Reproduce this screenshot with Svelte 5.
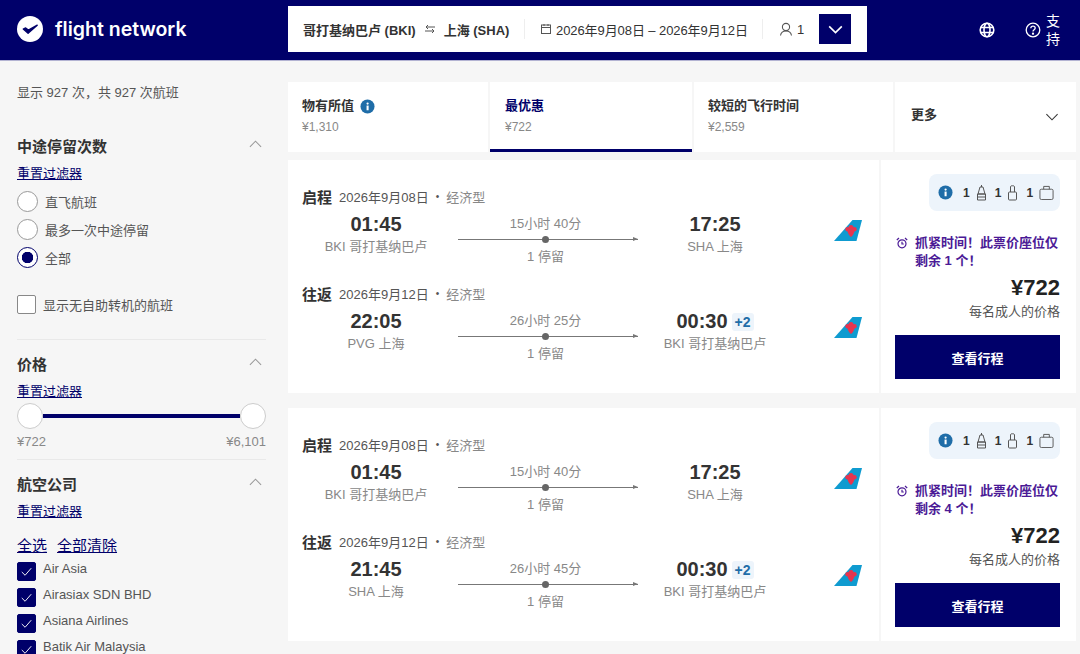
<script>
  const tabs = [
    { title: '物有所值', price: '¥1,310', info: true },
    { title: '最优惠', price: '¥722', active: true },
    { title: '较短的飞行时间', price: '¥2,559' }
  ]
  const stops = ['直飞航班', '最多一次中途停留', '全部']
  const airlines = ['Air Asia', 'Airasiax SDN BHD', 'Asiana Airlines', 'Batik Air Malaysia']
  const cards = [
    {
      left: 1,
      legs: [
        { kind: '启程', date: '2026年9月08日', dep: '01:45', from: 'BKI 哥打基纳巴卢', dur: '15小时 40分', arr: '17:25', to: 'SHA 上海' },
        { kind: '往返', date: '2026年9月12日', dep: '22:05', from: 'PVG 上海', dur: '26小时 25分', arr: '00:30', plus: '+2', to: 'BKI 哥打基纳巴卢' }
      ]
    },
    {
      left: 4,
      legs: [
        { kind: '启程', date: '2026年9月08日', dep: '01:45', from: 'BKI 哥打基纳巴卢', dur: '15小时 40分', arr: '17:25', to: 'SHA 上海' },
        { kind: '往返', date: '2026年9月12日', dep: '21:45', from: 'SHA 上海', dur: '26小时 45分', arr: '00:30', plus: '+2', to: 'BKI 哥打基纳巴卢' }
      ]
    }
  ]
</script>

{#snippet chevron(cls)}
  <svg class={cls} viewBox="0 0 16 10" fill="none" stroke="currentColor" stroke-width="1.3"><path d="M1 1.5 8 8.5 15 1.5" /></svg>
{/snippet}

{#snippet info()}
  <svg class="info" viewBox="0 0 16 16"><circle cx="8" cy="8" r="7.5" fill="#1f6da8" /><rect x="7" y="7" width="2.2" height="5" fill="#fff" /><circle cx="8.1" cy="4.8" r="1.2" fill="#fff" /></svg>
{/snippet}

{#snippet tail()}
  <svg class="tail" viewBox="0 0 28 21">
    <path d="M28 0H18.5L0 21H22.5Z" fill="#0f9bd0" />
    <g fill="#e8344e">
      <circle cx="13.6" cy="9.2" r="2.3" />
      <circle cx="17" cy="7.6" r="2.5" />
      <circle cx="20.4" cy="9.2" r="2.3" />
      <path d="M13.4 10H20.6C20.4 13 19 15.4 17 17 15 15.4 13.6 13 13.4 10Z" />
    </g>
  </svg>
{/snippet}

<header class="topbar">
  <div class="logo">
    <svg viewBox="0 0 27 27"><circle cx="13.5" cy="13.5" r="13.5" fill="#fff" /><path d="M6.5 13.5 11.5 18 21 9.5 11.8 14.6 9 12.4Z" fill="#00006a" stroke="#00006a" stroke-width="1.4" stroke-linejoin="round" /></svg>
    <span>flight network</span>
  </div>
  <div class="search">
    <div class="route">
      <span>哥打基纳巴卢 (BKI)</span>
      <svg class="swap" viewBox="0 0 12 10" fill="none" stroke="#555" stroke-width="1"><path d="M11 3H2M4 1 2 3 4 5M1 7H10M8 5 10 7 8 9" /></svg>
      <span>上海 (SHA)</span>
    </div>
    <div class="dates">
      <svg class="cal" viewBox="0 0 12 12" fill="none" stroke="#555" stroke-width="1"><rect x="1.5" y="2" width="9" height="8.5" /><path d="M1.5 4.5H10.5M4 1V3M8 1V3" /></svg>
      <span>2026年9月08日 – 2026年9月12日</span>
    </div>
    <div class="pax">
      <svg viewBox="0 0 14 14" fill="none" stroke="#555" stroke-width="1.1"><circle cx="7" cy="5" r="3.6" /><path d="M1.5 13.5C2 10.5 4 9 7 9s5 1.5 5.5 4.5" /></svg>
      <span>1</span>
    </div>
    <button class="expand" aria-label="展开">{@render chevron('chev-white')}</button>
  </div>
  <div class="top-right">
    <svg class="globe" viewBox="0 0 16 16" fill="none" stroke="#fff" stroke-width="1.6"><circle cx="8" cy="8" r="6.8" /><ellipse cx="8" cy="8" rx="3" ry="6.8" /><path d="M1.5 5.5H14.5M1.5 10.5H14.5" /></svg>
    <svg class="help" viewBox="0 0 16 16" fill="none" stroke="#fff" stroke-width="1.3"><circle cx="8" cy="8" r="6.8" /><path d="M5.8 6.2C5.9 4.8 6.8 4.1 8 4.1s2.2.8 2.2 2c0 1.7-2.2 1.7-2.2 3.5" /><circle cx="8" cy="11.7" r=".5" fill="#fff" /></svg>
    <span class="support">支持</span>
  </div>
</header>

<div class="page">
  <aside class="sidebar">
    <p class="count">显示 927 次，共 927 次航班</p>

    <section class="filter">
      <div class="filter-head"><h3>中途停留次数</h3>{@render chevron('chev-up')}</div>
      <a class="reset" href="#top">重置过滤器</a>
      <div class="radios">
        {#each stops as s, i}
          <div class="radio-row">
            <span class="radio" class:on={i === 2}></span>
            <span>{s}</span>
          </div>
        {/each}
      </div>
      <div class="selfcheck"><span class="box"></span><span>显示无自助转机的航班</span></div>
    </section>

    <section class="filter">
      <div class="filter-head"><h3>价格</h3>{@render chevron('chev-up')}</div>
      <a class="reset" href="#top">重置过滤器</a>
      <div class="slider"><span class="knob"></span><span class="track"></span><span class="knob"></span></div>
      <div class="range"><span>¥722</span><span>¥6,101</span></div>
    </section>

    <section class="filter">
      <div class="filter-head"><h3>航空公司</h3>{@render chevron('chev-up')}</div>
      <a class="reset" href="#top">重置过滤器</a>
      <div class="bulk"><a href="#top">全选</a><a href="#top">全部清除</a></div>
      {#each airlines as a}
        <div class="airline">
          <span class="box checked"><svg viewBox="0 0 18 18" fill="none" stroke="#fff" stroke-width="1"><path d="M4 9.5 7.5 13 14 5.5" /></svg></span>
          <span>{a}</span>
        </div>
      {/each}
    </section>
  </aside>

  <main class="results">
    <div class="tabs">
      {#each tabs as t}
        <div class="tab" class:active={t.active}>
          <div class="tab-title">{t.title}{#if t.info}{@render info()}{/if}</div>
          <div class="tab-price">{t.price}</div>
        </div>
      {/each}
      <div class="tab more"><span class="tab-title">更多</span>{@render chevron('chev-more')}</div>
    </div>

    {#each cards as card}
      <article class="card">
        <div class="legs">
          {#each card.legs as leg}
            <div class="leg">
              <div class="leg-head">
                <strong>{leg.kind}</strong>
                <span class="date">{leg.date}</span>
                <span class="dot">•</span>
                <span class="cabin">经济型</span>
              </div>
              <div class="leg-body">
                <div class="stop">
                  <div class="time">{leg.dep}</div>
                  <div class="place">{leg.from}</div>
                </div>
                <div class="line">
                  <div class="dur">{leg.dur}</div>
                  <div class="rule"><i></i><b></b></div>
                  <div class="dur">1 停留</div>
                </div>
                <div class="stop arrive">
                  <div class="time">{leg.arr}{#if leg.plus}<span class="plus">{leg.plus}</span>{/if}</div>
                  <div class="place">{leg.to}</div>
                </div>
                {@render tail()}
              </div>
            </div>
          {/each}
        </div>
        <div class="offer">
          <div class="bags">
            {@render info()}
            <span>1</span>
            <svg class="bag" viewBox="0 0 11 17" fill="none" stroke="#555" stroke-width="1"><path d="M5.5 1V3M4 3H7L9 10H2ZM1.5 10H9.5V16H1.5ZM1.5 13H9.5" /></svg>
            <span>1</span>
            <svg class="bag" viewBox="0 0 11 17" fill="none" stroke="#555" stroke-width="1"><rect x="1.5" y="8" width="8" height="8" rx="1" /><path d="M3.5 8V2.5C3.5 1.5 7.5 1.5 7.5 2.5V8" /></svg>
            <span>1</span>
            <svg class="case" viewBox="0 0 16 16" fill="none" stroke="#555" stroke-width="1"><rect x="1" y="4.5" width="14" height="11" rx="1.5" /><path d="M5 4.5V1.5H11V4.5" /></svg>
          </div>
          <div class="hurry">
            <svg viewBox="0 0 12 12" fill="none" stroke="#4b1a96" stroke-width="1.2"><circle cx="6" cy="6.8" r="4" /><path d="M6 4.8V7H7.8M.8 3 3 1M11.2 3 9 1" /></svg>
            <span>抓紧时间！此票价座位仅剩余 {card.left} 个！</span>
          </div>
          <div class="price">¥722</div>
          <div class="per">每名成人的价格</div>
          <button class="view">查看行程</button>
        </div>
      </article>
    {/each}
  </main>
</div>

<style>
  :global(body) {
    margin: 0;
    background: #f6f6f6;
    overflow: hidden;
    font-family: "Liberation Sans", "Noto Sans CJK SC", sans-serif;
    color: #333;
  }

  .topbar {
    height: 61px;
    box-sizing: border-box;
    background: #00006a;
    border-bottom: 1px solid #b3b3d2;
    display: flex;
    align-items: center;
    padding: 0 0 0 17px;
  }
  .logo {
    width: 271px;
    flex: none;
    display: flex;
    align-items: center;
    gap: 12px;
    color: #fff;
    margin-top: -2px;
  }
  .logo svg { width: 26px; height: 26px; flex: none; }
  .logo span {
    font-family: Inter, "Liberation Sans", sans-serif;
    font-size: 19.5px;
    font-weight: 600;
  }

  .search {
    width: 579px;
    flex: none;
    height: 46px;
    background: #fff;
    display: flex;
    align-items: center;
    margin-top: -2px;
    font-size: 13px;
    box-sizing: border-box;
    white-space: nowrap;
  }
  .route {
    display: flex;
    align-items: center;
    font-weight: 600;
    color: #333;
    padding-left: 15px;
    width: 237px;
    height: 20px;
    box-sizing: border-box;
    border-right: 1px solid #eee;
    flex: none;
  }
  .swap { width: 12px; height: 10px; margin: 0 8px 0 8px; flex: none; }
  .dates {
    display: flex;
    align-items: center;
    gap: 4px;
    width: 238px;
    height: 20px;
    padding-left: 15px;
    box-sizing: border-box;
    border-right: 1px solid #eee;
    letter-spacing: -0.08px;
    flex: none;
  }
  .cal { width: 12px; height: 12px; flex: none; }
  .pax { display: flex; align-items: center; gap: 4px; padding-left: 16px; width: 56px; box-sizing: border-box; flex: none; }
  .pax svg { width: 14px; height: 14px; }
  .expand {
    width: 32px;
    height: 30px;
    background: #00006a;
    border: 0;
    padding: 0;
    display: flex;
    align-items: center;
    justify-content: center;
    flex: none;
  }
  .chev-white { width: 15px; height: 9px; color: #fff; stroke-width: 1.8; }

  .top-right { display: flex; align-items: center; color: #fff; margin-left: 112px; }
  .globe { width: 16px; height: 16px; margin-right: 30px; flex: none; }
  .help { width: 16px; height: 16px; margin-right: 5px; flex: none; }
  .support { width: 14px; font-size: 14px; line-height: 18px; }

  .page {
    display: flex;
    padding: 21px 4px 0 17px;
    gap: 22px;
    align-items: flex-start;
  }

  .sidebar { width: 249px; flex: none; font-size: 13px; color: #555; }
  .count { margin: 1px 0 32px; line-height: 20px; }
  .filter { border-bottom: 1px solid #e9e9e9; padding: 0 0 8px; margin-bottom: 13px; }
  .filter:last-child { border: 0; }
  .filter-head { display: flex; justify-content: space-between; align-items: center; height: 20px; }
  .filter-head h3 { margin: 0; font-size: 15px; font-weight: 600; color: #333; }
  .chev-up { width: 15px; height: 8px; color: #999; transform: rotate(180deg); margin: 0 3px 2px 0; }
  .reset {
    display: block;
    margin-top: 9px;
    line-height: 20px;
    color: #00006a;
    font-size: 13px;
  }

  .radios { margin-top: 7px; display: flex; flex-direction: column; gap: 7px; }
  .radio-row { display: flex; align-items: center; gap: 7px; height: 21px; }
  .radio {
    width: 21px;
    height: 21px;
    box-sizing: border-box;
    border: 1px solid #999;
    background: #fff;
    border-radius: 50%;
    flex: none;
  }
  .radio.on { border-color: #00006a; background: radial-gradient(circle, #00006a 0 5.5px, #fff 6px); }
  .selfcheck { display: flex; align-items: center; gap: 7px; margin: 27px 0 18px; height: 18px; }
  .box {
    width: 19px;
    height: 19px;
    box-sizing: border-box;
    border: 1px solid #888;
    border-radius: 2px;
    background: #fff;
    flex: none;
    display: block;
  }
  .box.checked { background: #00006a; border-color: #00006a; }
  .box svg { display: block; width: 17px; height: 17px; }

  .slider { display: flex; align-items: center; height: 26px; margin-top: 1px; }
  .knob {
    width: 26px;
    height: 26px;
    box-sizing: border-box;
    border: 1px solid #ccc;
    border-radius: 50%;
    background: #fff;
    flex: none;
  }
  .track { height: 4px; background: #00006a; flex: 1; }
  .range { display: flex; justify-content: space-between; color: #888; line-height: 18px; margin-top: 4px; }

  .bulk { display: flex; gap: 10px; margin: 14px 0 5px; font-size: 15px; line-height: 20px; }
  .bulk a { color: #00006a; }
  .airline { display: flex; align-items: flex-start; gap: 7px; height: 26px; line-height: 16px; }
  .airline .box { margin-top: 1px; }

  .results { width: 788px; flex: none; }
  .tabs { display: flex; height: 70px; background: #fff; margin-bottom: 8px; }
  .tab {
    box-sizing: border-box;
    width: 202px;
    padding: 14px 15px 0;
    border-right: 2px solid #f6f6f6;
  }
  .tab:first-child { padding-left: 14px; }
  .tab.active { border-right: 0; border-bottom: 3px solid #00006a; }
  .tab.active + .tab { width: 203px; border-left: 2px solid #f6f6f6; padding-left: 14px; }
  .tab-title { display: flex; align-items: center; gap: 6px; font-size: 13px; font-weight: 600; color: #333; line-height: 20px; }
  .tab.active .tab-title { color: #00006a; }
  .tab-price { font-size: 12px; color: #888; line-height: 20px; margin-top: 1px; }
  .tab.more {
    width: 181px;
    border: 0;
    padding: 0 17px 4px 16px;
    display: flex;
    align-items: center;
    justify-content: space-between;
  }
  .chev-more { width: 14px; height: 8px; color: #333; margin-top: 4px; }
  .info { width: 15px; height: 15px; flex: none; }

  .card { display: flex; height: 233px; background: #fff; margin-bottom: 15px; }
  .legs { width: 577px; padding: 26px 0 0 14px; border-right: 2px solid #f6f6f6; flex: none; }
  .leg { height: 97px; }
  .leg-head { display: flex; align-items: center; height: 20px; font-size: 13px; color: #555; }
  .leg-head strong { font-size: 15px; font-weight: 600; color: #333; margin-right: 7px; }
  .dot { margin: 0 7px; font-size: 10px; }
  .cabin { color: #888; }
  .leg-body { display: flex; margin-top: 6px; }
  .stop { width: 148px; text-align: center; }
  .arrive { width: 154px; }
  .time { font-size: 20px; font-weight: 700; color: #333; line-height: 25px; display: flex; justify-content: center; align-items: center; gap: 4px; }
  .plus {
    font-size: 14px;
    color: #1f6da8;
    background: #edf4fb;
    border-radius: 3px;
    padding: 0 3px;
    line-height: 18px;
  }
  .place { font-size: 13px; color: #888; line-height: 18px; margin-top: 1px; }
  .line { width: 180px; margin-left: 8px; text-align: center; font-size: 13px; color: #888; padding-top: 4px; }
  .dur { line-height: 16px; padding-right: 5px; }
  .rule { position: relative; height: 1px; background: #777; margin: 7px 0 9px; }
  .rule i {
    position: absolute;
    left: 84px;
    top: -3px;
    width: 7px;
    height: 7px;
    border-radius: 50%;
    background: #666;
  }
  .rule b {
    position: absolute;
    right: 0;
    top: -2px;
    border-left: 5px solid #777;
    border-top: 2.5px solid transparent;
    border-bottom: 2.5px solid transparent;
  }
  .tail { width: 28px; height: 21px; margin: 8px 0 0 42px; flex: none; }

  .offer {
    flex: 1;
    box-sizing: border-box;
    padding: 14px 16px 0 14px;
    display: flex;
    flex-direction: column;
    align-items: flex-end;
  }
  .bags {
    width: 131px;
    height: 37px;
    box-sizing: border-box;
    background: #edf4fb;
    border-radius: 8px;
    display: flex;
    align-items: center;
    gap: 7px;
    padding: 0 9px;
    font-size: 12px;
    font-weight: 600;
  }
  .bags .info { margin-right: 3px; }
  .bags span { margin-right: -1px; }
  .bag { width: 11px; height: 17px; margin-right: 1px; flex: none; }
  .case { width: 15px; height: 15px; flex: none; }
  .hurry {
    width: 100%;
    display: flex;
    gap: 7px;
    margin-top: 23px;
    padding-left: 1px;
    box-sizing: border-box;
    font-size: 13px;
    line-height: 18px;
    font-weight: 600;
    color: #4b1a96;
  }
  .hurry svg { width: 12px; height: 12px; flex: none; margin-top: 3px; }
  .price { font-size: 22px; font-weight: 700; color: #222; line-height: 26px; margin-top: 5px; }
  .per { font-size: 13px; color: #555; line-height: 18px; margin-top: 2px; }
  .view {
    width: 165px;
    height: 44px;
    background: #00006a;
    color: #fff;
    border: 0;
    font: 600 13px "Liberation Sans", "Noto Sans CJK SC", sans-serif;
    margin-top: 14px;
  }
</style>
